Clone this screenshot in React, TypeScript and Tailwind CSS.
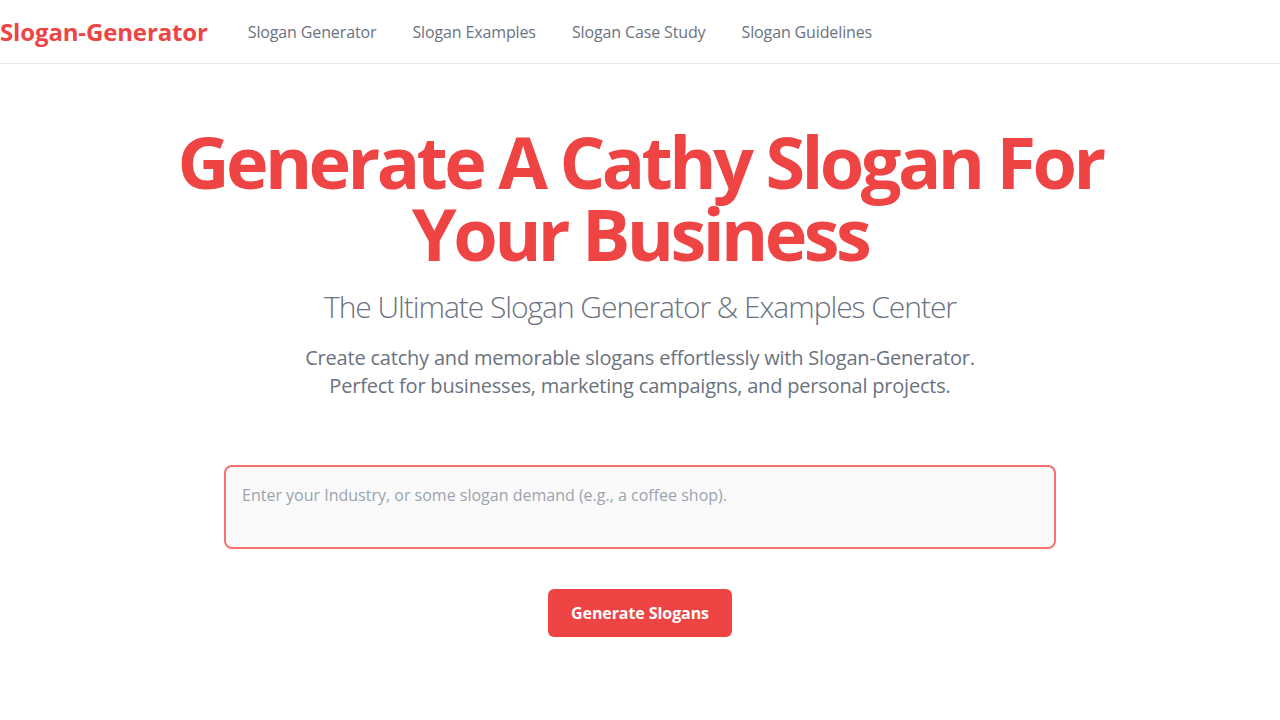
import { useState } from "react";

const NAV = ["Slogan Generator", "Slogan Examples", "Slogan Case Study", "Slogan Guidelines"];

export default function App() {
  const [demand, setDemand] = useState("");

  return (
    <div className="min-h-screen bg-white font-['Open_Sans',sans-serif]">
      <header className="flex h-16 items-center border-b border-gray-200">
        <a href="#" className="text-2xl font-bold tracking-[-0.006em] text-[#ef4444]">
          Slogan-Generator
        </a>
        <nav className="ml-10 flex gap-9">
          {NAV.map((item) => (
            <a key={item} href="#" className="text-base tracking-[-0.008em] text-[#6b7280]">
              {item}
            </a>
          ))}
        </nav>
      </header>

      <main className="flex flex-col items-center px-4 text-center">
        <h1 className="mt-[61px] max-w-5xl text-7xl leading-none font-bold tracking-tighter text-[#ef4444]">
          Generate A Cathy Slogan For Your Business
        </h1>
        <h2 className="mt-5 text-3xl font-light tracking-[-0.035em] text-[#6b7280]">
          The Ultimate Slogan Generator &amp; Examples Center
        </h2>
        <p className="mt-[19px] text-xl leading-7 tracking-[-0.01em] text-[#6b7280]">
          Create catchy and memorable slogans effortlessly with Slogan-Generator.
          <br />
          Perfect for businesses, marketing campaigns, and personal projects.
        </p>

        <textarea
          value={demand}
          onChange={(e) => setDemand(e.target.value)}
          placeholder="Enter your Industry, or some slogan demand (e.g., a coffee shop)."
          className="mt-[65px] h-[84px] w-[832px] resize-none rounded-lg border-2 border-[#f87171] bg-[#fafafa] px-4 py-4 text-base text-gray-700 placeholder:text-[#9ca3af] focus:outline-none"
        />

        <button className="mt-10 h-12 rounded-md bg-[#ef4444] px-[23px] text-base font-bold tracking-[-0.005em] text-white">
          Generate Slogans
        </button>
      </main>
    </div>
  );
}
